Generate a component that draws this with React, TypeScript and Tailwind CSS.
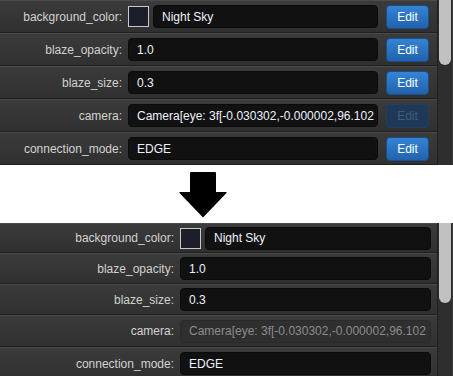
type Prop = {
  label: string;
  value: string;
  swatch?: boolean;
  disabled?: boolean;
  h: string;
};

const topRows: Prop[] = [
  { label: "background_color:", value: "Night Sky", swatch: true, h: "h-[33px]" },
  { label: "blaze_opacity:", value: "1.0", h: "h-[33px]" },
  { label: "blaze_size:", value: "0.3", h: "h-[33px]" },
  { label: "camera:", value: "Camera[eye: 3f[-0.030302,-0.000002,96.102", disabled: true, h: "h-[33px]" },
  { label: "connection_mode:", value: "EDGE", h: "h-[33px]" },
];

const bottomRows: Prop[] = [
  { label: "background_color:", value: "Night Sky", swatch: true, h: "h-[30px]" },
  { label: "blaze_opacity:", value: "1.0", h: "h-[31px]" },
  { label: "blaze_size:", value: "0.3", h: "h-[31px]" },
  { label: "camera:", value: "Camera[eye: 3f[-0.030302,-0.000002,96.102", disabled: true, h: "h-[32px]" },
  { label: "connection_mode:", value: "EDGE", h: "h-[33px]" },
];

const Row = ({ row, editable }: { row: Prop; editable: boolean }) => {
  const inputClass = row.disabled && !editable
    ? "bg-[#2f2f2f] text-[#8c8c8c] border-[#2a2a2a]"
    : "bg-[#111111] text-[#eef2fa] border-[#0b0b0b]";
  return (
    <div
      className={`flex ${row.h} shrink-0 items-center border-t border-b border-t-[#4a4a4a] border-b-[#1f1f1f] bg-gradient-to-b from-[#3b3b3b] to-[#303030] ${
        editable ? "pr-[8px]" : "pr-[6px]"
      }`}
    >
      <div
        className={`${
          editable ? "w-[122px]" : "w-[174px]"
        } shrink-0 whitespace-nowrap text-right text-[12px] text-[#d2d2d2]`}
      >
        {row.label}
      </div>
      <div className="ml-[6px] flex min-w-0 flex-1 items-center gap-[4px]">
        {row.swatch && (
          <div className="h-[21px] w-[21px] shrink-0 border border-[#c8c8c8] bg-[#1c1f29]" />
        )}
        <div
          className={`flex h-[23px] min-w-0 flex-1 items-center overflow-hidden whitespace-nowrap rounded-[4px] border pl-[8px] text-[12px] ${inputClass}`}
        >
          {row.value}
        </div>
      </div>
      {editable &&
        (row.disabled ? (
          <div className="ml-[8px] flex h-[24px] w-[43px] shrink-0 items-center justify-center rounded-[4px] border border-[#22405e] bg-[#1d3957] text-[12px] text-[#3f5d7c]">
            Edit
          </div>
        ) : (
          <div className="ml-[8px] flex h-[24px] w-[43px] shrink-0 items-center justify-center rounded-[4px] border border-[#1a4f8c] bg-gradient-to-b from-[#3584d4] to-[#2162ad] text-[12px] text-white">
            Edit
          </div>
        ))}
    </div>
  );
};

const Panel = ({
  rows,
  editable,
  height,
  thumb,
}: {
  rows: Prop[];
  editable: boolean;
  height: string;
  thumb: string;
}) => (
  <div className={`flex ${height} overflow-hidden bg-[#2c2c2c]`}>
    <div className="flex w-[438px] shrink-0 flex-col border-r border-r-[#1f1f1f]">
      {rows.map((r) => (
        <Row key={r.label} row={r} editable={editable} />
      ))}
    </div>
    <div className="flex flex-1 flex-col border-r border-r-[#3a3a3a] bg-[#2e2e2e] pl-[1px] pr-[1px]">
      <div className={`${thumb} rounded-b-[6px] bg-[#c1c1c1]`} />
    </div>
  </div>
);

const App = () => {
  return (
    <div
      className="flex w-[453px] flex-col bg-white"
      style={{ fontFamily: '"Liberation Sans", Arial, sans-serif' }}
    >
      <Panel rows={topRows} editable height="h-[165px]" thumb="h-[65px]" />
      <div className="flex h-[58px] pl-[179px] pt-[7px]">
        <svg width="48" height="46" viewBox="0 0 48 46">
          <path
            d="M12 0 H36 Q37 0 37 1 V20 H47 Q48 20 47.5 21 L24 45.5 L0.5 21 Q0 20 1 20 H11 V1 Q11 0 12 0 Z"
            fill="#000"
          />
        </svg>
      </div>
      <Panel rows={bottomRows} editable={false} height="h-[153px]" thumb="h-[80px]" />
    </div>
  );
};

export default App;
